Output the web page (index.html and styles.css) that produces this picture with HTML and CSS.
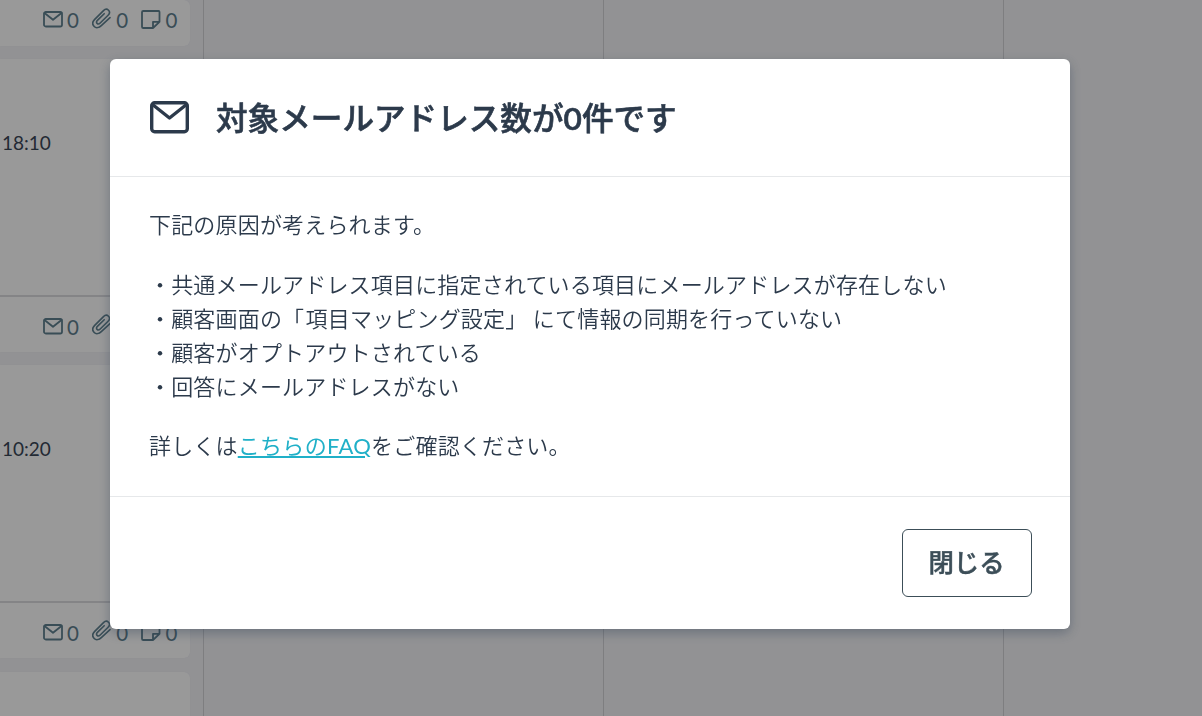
FILE: index.html
```html
<!DOCTYPE html>
<html lang="ja">
<head>
    <meta charset="UTF-8">
    <meta name="viewport" content="width=device-width, initial-scale=1.0">
    <title>対象メールアドレス数が0件です</title>
    <link rel="stylesheet" href="styles.css">
</head>

<body>
    <svg class="sprite" width="0" height="0">
        <symbol id="mail" viewBox="0 0 20 17">
            <rect x="1" y="1" width="18" height="14.5" rx="1.8"/>
            <path d="M1.5 2L10 8.8L18.5 2"/>
        </symbol>
        <symbol id="clip" viewBox="0 0 20 21">
            <path d="M18 9.6L9.3 17.6C7.2 19.6 4.2 20.6 2.2 18.5C0.1 16.4 0.6 13.5 2.7 11.4L11.5 2.6C13 1.1 15 0.7 16.5 2.2C18 3.7 17.6 5.7 16.1 7.2L8.2 15C7.2 16 6 16.3 5.1 15.4C4.2 14.5 4.4 13.4 5.4 12.4L12.2 5.7"/>
        </symbol>
        <symbol id="note" viewBox="0 0 20 19">
            <path d="M2.3 1H17.6Q18.5 1 18.5 1.9V11.8L12 18H2.3Q1 18 1 16.7V2.3Q1 1 2.3 1ZM12 18V11.8H18.5"/>
        </symbol>
    </svg>

    <div class="board">
        <div class="column column-first">
            <div class="card card-top">
                <div class="card-footer">
                    <span class="stat"><svg class="icon icon-mail"><use href="#mail"/></svg>0</span>
                    <span class="stat"><svg class="icon icon-clip"><use href="#clip"/></svg>0</span>
                    <span class="stat"><svg class="icon icon-note"><use href="#note"/></svg>0</span>
                </div>
            </div>
            <div class="card">
                <div class="card-body">18:10</div>
                <div class="card-footer">
                    <span class="stat"><svg class="icon icon-mail"><use href="#mail"/></svg>0</span>
                    <span class="stat"><svg class="icon icon-clip"><use href="#clip"/></svg></span>
                </div>
            </div>
            <div class="card">
                <div class="card-body">10:20</div>
                <div class="card-footer">
                    <span class="stat"><svg class="icon icon-mail"><use href="#mail"/></svg>0</span>
                    <span class="stat"><svg class="icon icon-clip"><use href="#clip"/></svg>0</span>
                    <span class="stat"><svg class="icon icon-note"><use href="#note"/></svg>0</span>
                </div>
            </div>
            <div class="card">
                <div class="card-body"></div>
            </div>
        </div>
        <div class="column"></div>
        <div class="column"></div>
    </div>

    <div class="backdrop">
        <div class="modal">
            <div class="modal-header">
                <svg class="title-icon" viewBox="0 0 40 33">
                    <rect x="1.7" y="1.7" width="35.6" height="29" rx="3"/>
                    <path d="M2.5 3.5L19.5 17L36.5 3.5"/>
                </svg>
                <h2>対象メールアドレス数が<span class="count">0</span>件です</h2>
            </div>
            <div class="modal-body">
                <p>下記の原因が考えられます。</p>
                <p>・共通メールアドレス項目に指定されている項目にメールアドレスが存在しない<br>
                ・顧客画面の<span class="bracket">「</span>項目マッピング設定<span class="bracket">」</span>にて情報の同期を行っていない<br>
                ・顧客がオプトアウトされている<br>
                ・回答にメールアドレスがない</p>
                <p>詳しくは<a href="#">こちらのFAQ</a>をご確認ください。</p>
            </div>
            <div class="modal-footer">
                <button type="button" class="close">閉じる</button>
            </div>
        </div>
    </div>
</body>
</html>
```
FILE: styles.css
```css
* {
    box-sizing: border-box;
}

body {
    margin: 0;
    height: 716px;
    overflow: hidden;
    font-family: Lato, 'Noto Sans CJK JP', sans-serif;
    color: #2c3a4b;
    background-color: #f4f4f7;
}

.sprite {
    display: block;
}

.board {
    display: flex;
    height: 716px;
    overflow: hidden;
}

.column {
    flex: none;
    width: 400px;
    border-right: 1px solid #d2d2d6;
}

.column-first {
    width: 204px;
    padding-right: 13px;
}

.card {
    height: 293px;
    margin-bottom: 13.4px;
    background-color: #fff;
    border-radius: 0 6px 6px 0;
    box-shadow: 0 0 1px #e0e0f4;
}

.card-top {
    height: 45.6px;
}

.card-body {
    height: 238px;
    padding: 72px 0 0 2px;
    font-size: 19px;
    line-height: 23px;
    color: #3a4658;
    border-bottom: 2px solid #dcdce0;
}

.card-top .card-footer {
    padding-top: 7px;
}

.card-footer {
    display: flex;
    gap: 13.3px;
    padding: 16.6px 0 0 43px;
}

.stat {
    display: flex;
    align-items: center;
    gap: 4px;
    height: 26px;
    font-size: 20.5px;
    line-height: 26px;
    color: #5f8090;
}

.icon,
.title-icon {
    flex: none;
    fill: none;
    stroke: currentColor;
    stroke-linejoin: round;
    stroke-linecap: round;
}

.icon {
    width: 20px;
    stroke-width: 1.8px;
}

.icon-mail {
    height: 17px;
    margin-top: -1px;
}

.icon-clip {
    height: 21px;
    margin-top: -4px;
    stroke-width: 1.6px;
}

.icon-note {
    height: 19px;
    margin-top: -2px;
}

.backdrop {
    position: fixed;
    inset: 0;
    padding: 59px 0 0 110px;
    background-color: rgba(0, 0, 0, 0.4);
}

.modal {
    width: 960px;
    height: 570px;
    background-color: #fff;
    border-radius: 6px;
    box-shadow: 0 4px 12px rgba(44, 62, 85, 0.4);
}

.modal-header {
    display: flex;
    align-items: center;
    gap: 26px;
    height: 118px;
    padding: 0 40px;
    border-bottom: 1px solid #e6e8ea;
}

.title-icon {
    width: 40px;
    height: 33px;
    stroke-width: 3.4px;
}

.modal-header h2 {
    margin: 0;
    font-size: 31.6px;
    font-weight: 500;
    line-height: 48px;
    -webkit-text-stroke: 0.6px currentColor;
}

.count {
    font-weight: 600;
}

.modal-body {
    height: 320px;
    padding: 31px 39px 0;
    font-size: 22px;
    font-weight: 350;
    letter-spacing: 0.18px;
    line-height: 34px;
    border-bottom: 1px solid #e6e8ea;
}

.modal-body p {
    margin: 0 0 25.6px;
}

.bracket {
    letter-spacing: 1.5px;
}

.bracket:last-of-type {
    letter-spacing: 5.6px;
}

.modal-body a {
    color: #20b0c8;
    font-weight: 400;
    letter-spacing: 0.3px;
    text-underline-offset: 2px;
    text-decoration-thickness: 2px;
}

.modal-footer {
    display: flex;
    justify-content: flex-end;
    padding: 32px 38px;
}

.close {
    width: 130px;
    height: 68px;
    padding: 0 1px 5px 0;
    font-family: inherit;
    font-size: 25.4px;
    font-weight: 500;
    color: #3c4e58;
    background-color: #fff;
    border: 1px solid #3c4e58;
    border-radius: 6px;
    -webkit-text-stroke: 0.5px currentColor;
}
```
